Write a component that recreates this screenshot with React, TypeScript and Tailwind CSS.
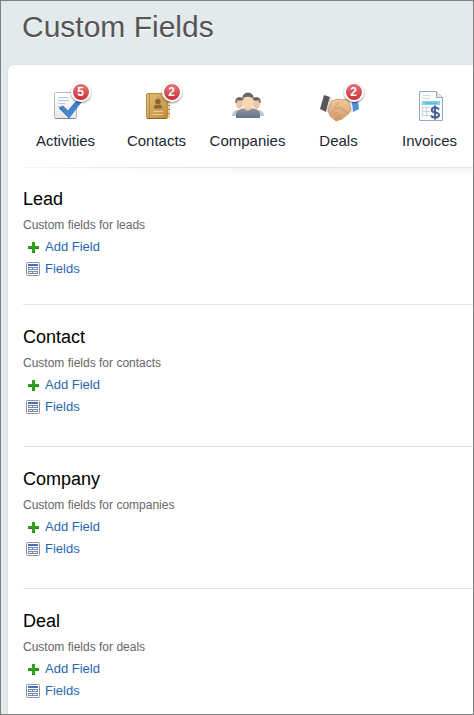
import type { ReactNode } from "react";

function ActivitiesIcon() {
  return (
    <svg width="32" height="32" viewBox="0 0 32 32" aria-hidden="true">
      <defs>
        <linearGradient id="check" x1="0" y1="0" x2="0" y2="1">
          <stop offset="0" stopColor="#3f74b8" />
          <stop offset="1" stopColor="#4a90dd" />
        </linearGradient>
        <linearGradient id="sheet" x1="0" y1="0" x2="0" y2="1">
          <stop offset="0" stopColor="#ffffff" />
          <stop offset="1" stopColor="#e6e9ec" />
        </linearGradient>
      </defs>
      <rect x="4.5" y="2.5" width="22" height="26" rx="1" fill="url(#sheet)" stroke="#b3b9be" />
      <path d="M5 28.5h21" stroke="#83898e" />
      <path d="M8 7.5h11M8 10.5h11M8 13.5h7M8 16.5h4" stroke="#bccbe0" />
      <path d="M9 18l4-2 5 5L28 9l4 2-13 17z" fill="url(#check)" stroke="#3b70b3" strokeWidth="0.8" strokeLinejoin="round" />
    </svg>
  );
}

function ContactsIcon() {
  return (
    <svg width="32" height="32" viewBox="-1 0 32 32" aria-hidden="true">
      <defs>
        <linearGradient id="book" x1="0" y1="0" x2="1" y2="1">
          <stop offset="0" stopColor="#e2bd77" />
          <stop offset="1" stopColor="#c18d3c" />
        </linearGradient>
      </defs>
      <path d="M25 4h3v24h-3z" fill="#e9d3a4" />
      <path d="M25 7.5h3M25 11.5h3M25 15.5h3M25 19.5h3M25 23.5h3" stroke="#b08138" />
      <rect x="4.5" y="3.5" width="21" height="25" rx="1.5" fill="url(#book)" stroke="#b88a42" />
      <path d="M7.5 4v24" stroke="#b98b42" />
      <path d="M5 28.5h20" stroke="#8d6222" />
      <circle cx="16" cy="11.5" r="2.8" fill="#8a6530" />
      <path d="M12 18.5v-1.5q0-2 2.500-2.500l1.500 1 1.500-1q2.500.5 2.500 2.500v1.500z" fill="#8a6530" />
      <path d="M11 21.5h10M11 24.5h10" stroke="#e9cd90" />
    </svg>
  );
}

function CompaniesIcon() {
  return (
    <svg width="32" height="32" viewBox="0 0 32 32" aria-hidden="true">
      <defs>
        <linearGradient id="suit" x1="0" y1="0" x2="0" y2="1">
          <stop offset="0" stopColor="#8b96a6" />
          <stop offset="1" stopColor="#667286" />
        </linearGradient>
      </defs>
      <path d="M0 26q0-5 5-6h22q5 1 5 6z" fill="#c3c6cb" />
      <ellipse cx="7.5" cy="14" rx="3.5" ry="5" fill="#f0c6a2" />
      <ellipse cx="24.5" cy="14" rx="3.5" ry="5" fill="#f0c6a2" />
      <path d="M3.5 13q-1-5 4-6 3 0 4 3-4 1-6 0l-1 3zM28.5 13q1-5-4-6-3 0-4 3 4 1 6 0l1 3z" fill="#6b6562" />
      <path d="M4 28v-4q0-4 8-6h8q8 2 8 6v4z" fill="url(#suit)" />
      <path d="M12 16h8v3q-4 4-8 0z" fill="#e6b58f" />
      <ellipse cx="16" cy="12" rx="5.5" ry="7.5" fill="#f8d5b5" />
      <path d="M10.5 11Q9 3 16 2.500q7 .5 5.500 8.500l-1-3q-4-2-8.500-.5z" fill="#6b6562" />
    </svg>
  );
}

function DealsIcon() {
  return (
    <svg width="42" height="32" viewBox="0 0 42 32" aria-hidden="true">
      <defs>
        <linearGradient id="hand" x1="0" y1="0" x2="0" y2="1">
          <stop offset="0" stopColor="#f3caa0" />
          <stop offset="1" stopColor="#d39a68" />
        </linearGradient>
      </defs>
      <path d="M6 5l6 2-4 15-6-3z" fill="#565859" />
      <path d="M12 7l2 1-4 14-2-1z" fill="#d6d8d8" />
      <path d="M33 7l6-2 2 14-6 3z" fill="#5291d7" />
      <path d="M31 8l2-1 2 15-2 1z" fill="#dfeaf7" />
      <path d="M14 11l6-2 4 1 6-1 3 11-3 4-6 5-6 2-6-5-2-6z" fill="url(#hand)" stroke="#c58f60" strokeWidth="0.8" />
      <path d="M21 12l-5 6q3 2 6-1l9 7M13 23l3-3M15 26l4-4M18 29l4-4" fill="none" stroke="#c08a5c" strokeWidth="0.8" />
    </svg>
  );
}

function InvoicesIcon() {
  return (
    <svg width="32" height="32" viewBox="-1 0 32 32" aria-hidden="true">
      <path d="M4.5 1.5h17l6 6v23h-23z" fill="#fafbfc" stroke="#9ba8b3" />
      <path d="M21.5 1.5v6h6" fill="#e2e7ea" stroke="#9ba8b3" />
      <path d="M8 5.5h7M8 8.5h7" stroke="#d6dadd" />
      <path d="M7 11h18v4H7z" fill="#84d4ea" />
      <path d="M10 13h12" stroke="#48a9c7" />
      <path d="M7 17.5h8M7 21.5h8M7 25.5h8M7.5 17v9M11.500 17v9" stroke="#cdd2d6" />
      <path d="M24 19.500q-1-2-4-2-3.200 0-3.200 2.400 0 2 3.200 2.500 4 .5 4 2.700 0 2.400-4 2.400-3 0-4-2M20 15.500v14" fill="none" stroke="#4a5e96" strokeWidth="2" />
    </svg>
  );
}

function PlusIcon() {
  return (
    <svg width="14" height="14" viewBox="0 0 14 14" aria-hidden="true">
      <path d="M6 2h3v4h4v3H9v4H6V9H2V6h4z" fill="#2fa31c" />
      <path d="M6 12h3v1H6zM2 8h4v1H2zM9 8h4v1H9z" fill="#25850f" />
    </svg>
  );
}

function FormIcon() {
  return (
    <svg width="14" height="14" viewBox="0 0 14 14" aria-hidden="true">
      <rect x="0.5" y="0.5" width="13" height="13" rx="1" fill="#fff" stroke="#929292" />
      <path d="M2 2h10v2H2z" fill="#4470b8" />
      <path d="M2 5h10v3H2zM2 9h10v3H2z" fill="#7189b8" />
      <path d="M3 6.5h3M7 6.5h4M3 10.5h3M7 10.5h4" stroke="#fff" />
    </svg>
  );
}

type Tab = { label: string; icon: ReactNode; count?: number };

const tabs: Tab[] = [
  { label: "Activities", icon: <ActivitiesIcon />, count: 5 },
  { label: "Contacts", icon: <ContactsIcon />, count: 2 },
  { label: "Companies", icon: <CompaniesIcon /> },
  { label: "Deals", icon: <DealsIcon />, count: 2 },
  { label: "Invoices", icon: <InvoicesIcon /> },
];

const sections = [
  { title: "Lead", plural: "leads" },
  { title: "Contact", plural: "contacts" },
  { title: "Company", plural: "companies" },
  { title: "Deal", plural: "deals" },
];

function NavTab({ label, icon, count }: Tab) {
  return (
    <a href="#" className="flex w-[91px] shrink-0 flex-col items-center gap-[9px] text-[15px] leading-5 text-[#202733]">
      <span className="relative flex h-8 justify-center">
        {icon}
        {count !== undefined && (
          <span className="absolute -top-2 left-1/2 ml-[5px] flex size-5 items-center justify-center rounded-full border-2 border-white bg-linear-to-b from-[#e5747a] to-[#cb2b34] text-xs font-bold text-white shadow-[0_1px_2px_#0008]">
            {count}
          </span>
        )}
      </span>
      {label}
    </a>
  );
}

function FieldSection({ title, plural }: { title: string; plural: string }) {
  return (
    <section className="pt-5 pb-7 first:pt-[19px] first:pb-6 last:pb-2">
      <h2 className="text-lg leading-6 text-black">{title}</h2>
      <p className="mt-1.5 text-xs leading-4 text-[#666]">Custom fields for {plural}</p>
      <div className="mt-[3px] flex flex-col items-start pl-[3px] text-[13px] leading-[22px] text-[#1f67b0]">
        <a href="#" className="flex items-center gap-[5px]">
          <PlusIcon />
          Add Field
        </a>
        <a href="#" className="flex items-center gap-[5px]">
          <FormIcon />
          Fields
        </a>
      </div>
    </section>
  );
}

export default function App() {
  return (
    <div className="min-h-screen overflow-hidden border border-[#808080] bg-[#e3eaeb] font-['Liberation_Sans',Arial,sans-serif]">
      <h1 className="px-[21px] pt-2 pb-5 text-3xl leading-9 text-[#555] [text-shadow:0_1px_0_#fff]">Custom Fields</h1>
      <main className="ml-[7px] min-h-[calc(100vh-66px)] rounded-tl-md bg-white shadow-[0_0_2px_#c4d0d2]">
        <nav className="flex overflow-hidden pt-[25px] pb-4 pl-3" aria-label="Sections">
          {tabs.map((tab) => (
            <NavTab key={tab.label} {...tab} />
          ))}
        </nav>
        <div className="ml-[15px]">
          <div className="h-px bg-linear-to-r from-[#f5f5f5] via-[#dfe2e3] via-40% to-[#e6e6e6]" />
          <div className="-mb-2 h-2 bg-linear-to-b from-[#f5f6f6] to-white mask-l-from-50%" />
          <div className="divide-y divide-[#e4e4e4]">
            {sections.map((section) => (
              <FieldSection key={section.title} {...section} />
            ))}
          </div>
        </div>
      </main>
    </div>
  );
}
